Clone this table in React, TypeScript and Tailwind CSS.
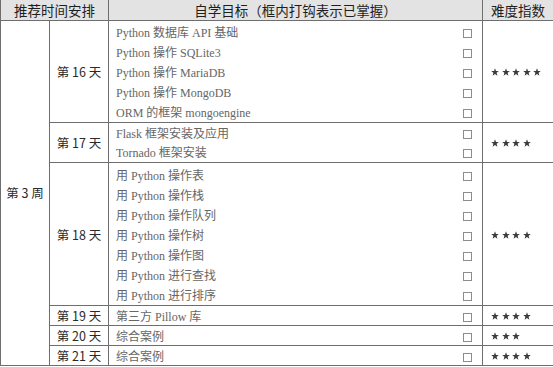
import React from "react";

const LINE = "border-[#6e6e6e]";

type Group = { day: string; items: string[]; stars: number; h: string; pt: string; rowH: string };

const groups: Group[] = [
  {
    day: "第 16 天",
    items: [
      "Python 数据库 API 基础",
      "Python 操作 SQLite3",
      "Python 操作 MariaDB",
      "Python 操作 MongoDB",
      "ORM 的框架 mongoengine",
    ],
    stars: 5,
    h: "h-[102px]",
    pt: "pt-[2px]",
    rowH: "h-[19.8px]",
  },
  {
    day: "第 17 天",
    items: ["Flask 框架安装及应用", "Tornado 框架安装"],
    stars: 4,
    h: "h-[40px]",
    pt: "pt-[1px]",
    rowH: "h-[19px]",
  },
  {
    day: "第 18 天",
    items: [
      "用 Python 操作表",
      "用 Python 操作栈",
      "用 Python 操作队列",
      "用 Python 操作树",
      "用 Python 操作图",
      "用 Python 进行查找",
      "用 Python 进行排序",
    ],
    stars: 4,
    h: "h-[143px]",
    pt: "pt-[2px]",
    rowH: "h-[20px]",
  },
  { day: "第 19 天", items: ["第三方 Pillow 库"], stars: 4, h: "h-[20px]", pt: "pt-[1px]", rowH: "h-[18px]" },
  { day: "第 20 天", items: ["综合案例"], stars: 3, h: "h-[20px]", pt: "pt-[1px]", rowH: "h-[18px]" },
  { day: "第 21 天", items: ["综合案例"], stars: 4, h: "h-[20px]", pt: "pt-[1px]", rowH: "h-[18px]" },
];

const sans = { fontFamily: '"Noto Sans CJK SC", "Noto Sans", sans-serif' };
const serif = { fontFamily: '"Liberation Serif", "Noto Sans CJK SC", serif' };

function Star() {
  return (
    <svg width="8" height="8" viewBox="0 0 10 10" className="block">
      <path
        d="M5 0.3 L6.25 3.75 L9.8 3.85 L7 6.05 L8 9.6 L5 7.55 L2 9.6 L3 6.05 L0.2 3.85 L3.75 3.75 Z"
        fill="#3c3c3c"
      />
    </svg>
  );
}

function Checkbox() {
  return <div className="w-[9px] h-[9px] border border-[#8c8c8c] bg-white mt-[2px]" />;
}

export default function App() {
  return (
    <div className="w-[553px] h-[367px] bg-white overflow-hidden">
      <div className={`border-l ${LINE}`}>
        {/* header */}
        <div
          className={`flex h-[21px] border-b ${LINE} bg-[#e3e3e3] text-[13.5px] text-[#1f1f1f] font-normal leading-none`}
          style={sans}
        >
          <div className={`w-[108px] border-r ${LINE} flex items-center justify-center pt-[2px]`}>推荐时间安排</div>
          <div className={`w-[374px] border-r ${LINE} flex items-center justify-center pt-[2px]`}>
            自学目标（框内打钩表示已掌握）
          </div>
          <div className="flex-1 flex items-center justify-center pt-[2px]">难度指数</div>
        </div>
        {/* body */}
        <div className="flex">
          <div
            className={`w-[49px] border-r border-b ${LINE} flex items-center justify-center text-[12.5px] text-[#2a2a2a] font-normal`}
            style={sans}
          >
            第 3 周
          </div>
          <div className="flex-1 flex flex-col">
            {groups.map((g) => (
              <div key={g.day} className={`flex ${g.h} border-b ${LINE}`}>
                <div
                  className={`w-[59px] border-r ${LINE} flex items-center justify-center text-[12.5px] text-[#2a2a2a] font-normal pt-[2px]`}
                  style={sans}
                >
                  {g.day}
                </div>
                <div className={`w-[374px] border-r ${LINE} flex flex-col ${g.pt}`}>
                  {g.items.map((it, i) => (
                    <div
                      key={i}
                      className={`${g.rowH} flex items-center justify-between pl-[7px] pr-[10px] text-[12px] text-[#666666] leading-none`}
                      style={serif}
                    >
                      <span className="pt-[1px]">{it}</span>
                      <Checkbox />
                    </div>
                  ))}
                </div>
                <div className="flex-1 flex items-center pl-[8px] gap-[2.5px] pt-[1px]">
                  {Array.from({ length: g.stars }).map((_, i) => (
                    <Star key={i} />
                  ))}
                </div>
              </div>
            ))}
          </div>
        </div>
      </div>
    </div>
  );
}
